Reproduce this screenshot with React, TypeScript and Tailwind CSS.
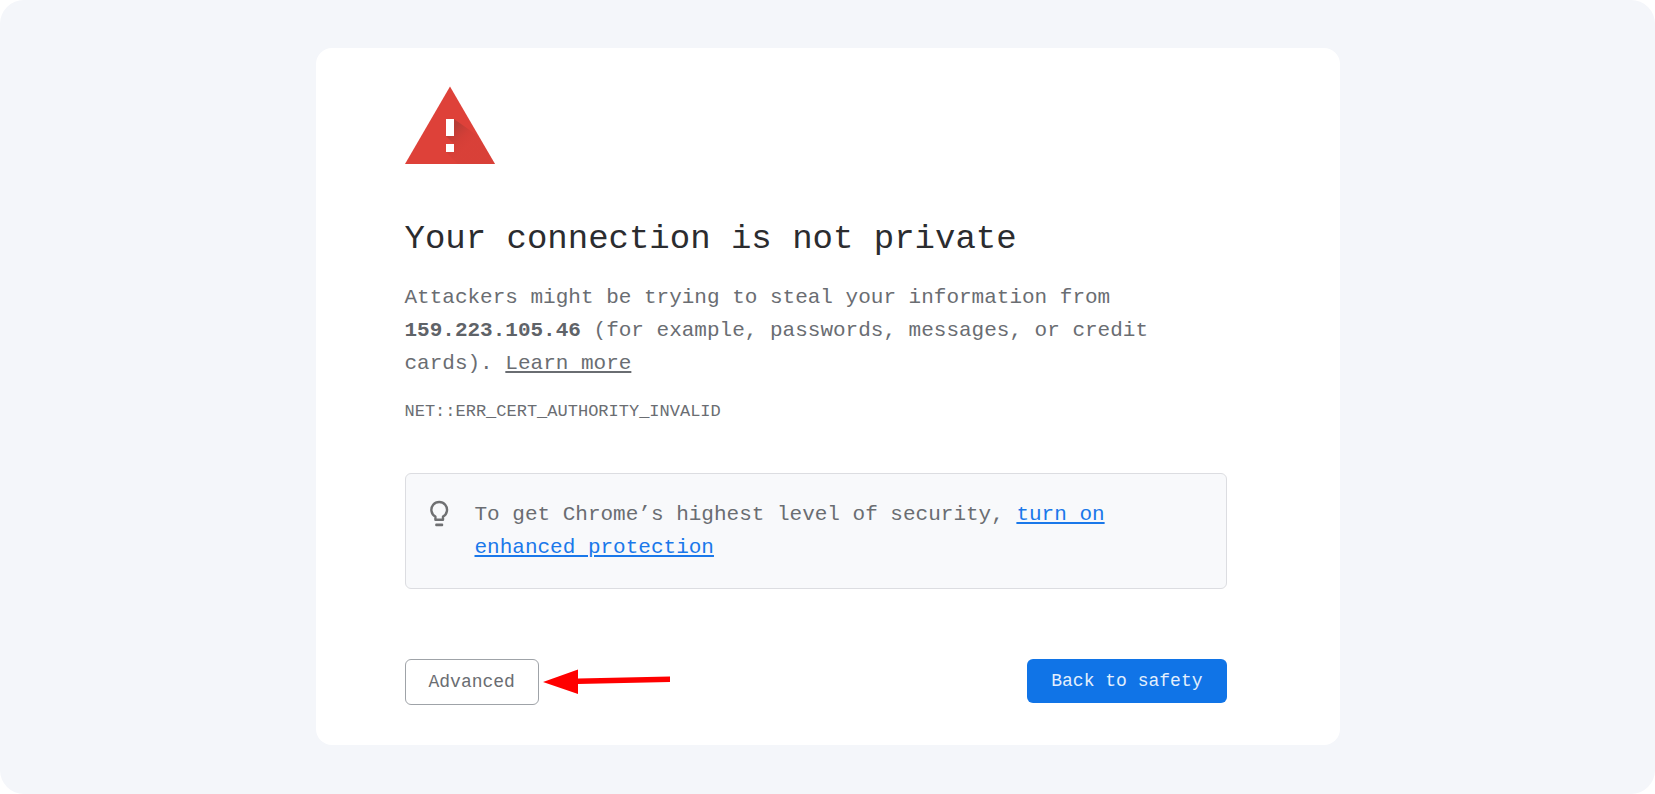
import { useState } from 'react'

function WarningIcon() {
  return (
    <svg width="90" height="78" viewBox="0 0 90 78" aria-hidden="true">
      <defs>
        <linearGradient id="shade" gradientUnits="userSpaceOnUse" x1="44" y1="46" x2="60" y2="62">
          <stop offset="0" stopColor="#9c3a34" stopOpacity="0.6" />
          <stop offset="0.6" stopColor="#c23a33" stopOpacity="0.35" />
          <stop offset="1" stopColor="#cc3e36" stopOpacity="0.3" />
        </linearGradient>
      </defs>
      <path d="M45 0.5L90 78H0z" fill="#de4139" />
      <path d="M49 33L73 50L90 78H53L41 66L49 66V58L41 50H49z" fill="url(#shade)" />
      <path d="M41 33h8v17h-8zM41 58h8v8h-8z" fill="#fff" />
    </svg>
  )
}

function BulbIcon() {
  return (
    <svg className="shrink-0" width="32" height="32" viewBox="0 0 32 32" fill="none" aria-hidden="true">
      <path d="M12.4 21.8V18.6A7.8 7.8 0 1 1 20 18.6V21.8z" stroke="#6f7072" strokeWidth="2.4" strokeLinejoin="round" />
      <rect x="12.2" y="25.4" width="8" height="2.8" rx="1" fill="#6f7072" />
    </svg>
  )
}

function Arrow() {
  return (
    <svg width="128" height="26" viewBox="0 0 128 26" fill="#ff0000" aria-hidden="true">
      <path d="M0 13L35 0.5V9.5L127 7.5V13L35 15V25z" />
    </svg>
  )
}

export default function App() {
  const [advanced, setAdvanced] = useState(false)

  return (
    <div className="bg-white">
      <main className="flex min-h-screen items-start justify-center rounded-3xl bg-[#f4f6fa] px-4 py-12 font-['Liberation_Mono',monospace] text-[#6a6d72]">
        <div className="w-full max-w-5xl rounded-2xl bg-white pt-[38px] pr-[113px] pb-10 pl-[89px]">
          <WarningIcon />
          <h1 className="mt-[55px] text-[34px] leading-10 text-[#2b2c2f]">Your connection is not private</h1>
          <p className="mt-[22px] text-[21px] leading-[33px]">
            Attackers might be trying to steal your information from{' '}
            <strong className="text-[#5f6368]">159.223.105.46</strong> (for example, passwords, messages, or credit
            cards).{' '}
            <a href="#learn-more" className="underline">
              Learn more
            </a>
          </p>
          <p className="mt-5 text-[17px] leading-6">NET::ERR_CERT_AUTHORITY_INVALID</p>

          {/* Enhanced protection tip */}
          <div className="mt-[49px] flex items-start gap-5 rounded-md border border-[#dcdde1] bg-[#f8f9fb] py-6 pr-6 pl-[17px]">
            <BulbIcon />
            <p className="text-[21px] leading-[33px]">
              To get Chrome’s highest level of security,{' '}
              <a href="#enhanced-protection" className="text-[#1a78ea] underline">
                turn on enhanced protection
              </a>
            </p>
          </div>

          {/* Actions */}
          <div className="mt-[70px] flex items-start justify-between">
            <div className="flex items-center gap-1">
              <button
                type="button"
                aria-pressed={advanced}
                onClick={() => setAdvanced(!advanced)}
                className="rounded-md border border-[#9fa3a8] px-[23px] py-[10px] text-[18px] leading-6"
              >
                Advanced
              </button>
              <Arrow />
            </div>
            <button type="button" className="rounded-md bg-[#1074e7] px-6 py-[10px] text-[18px] leading-6 text-[#e3effd]">
              Back to safety
            </button>
          </div>
        </div>
      </main>
    </div>
  )
}
